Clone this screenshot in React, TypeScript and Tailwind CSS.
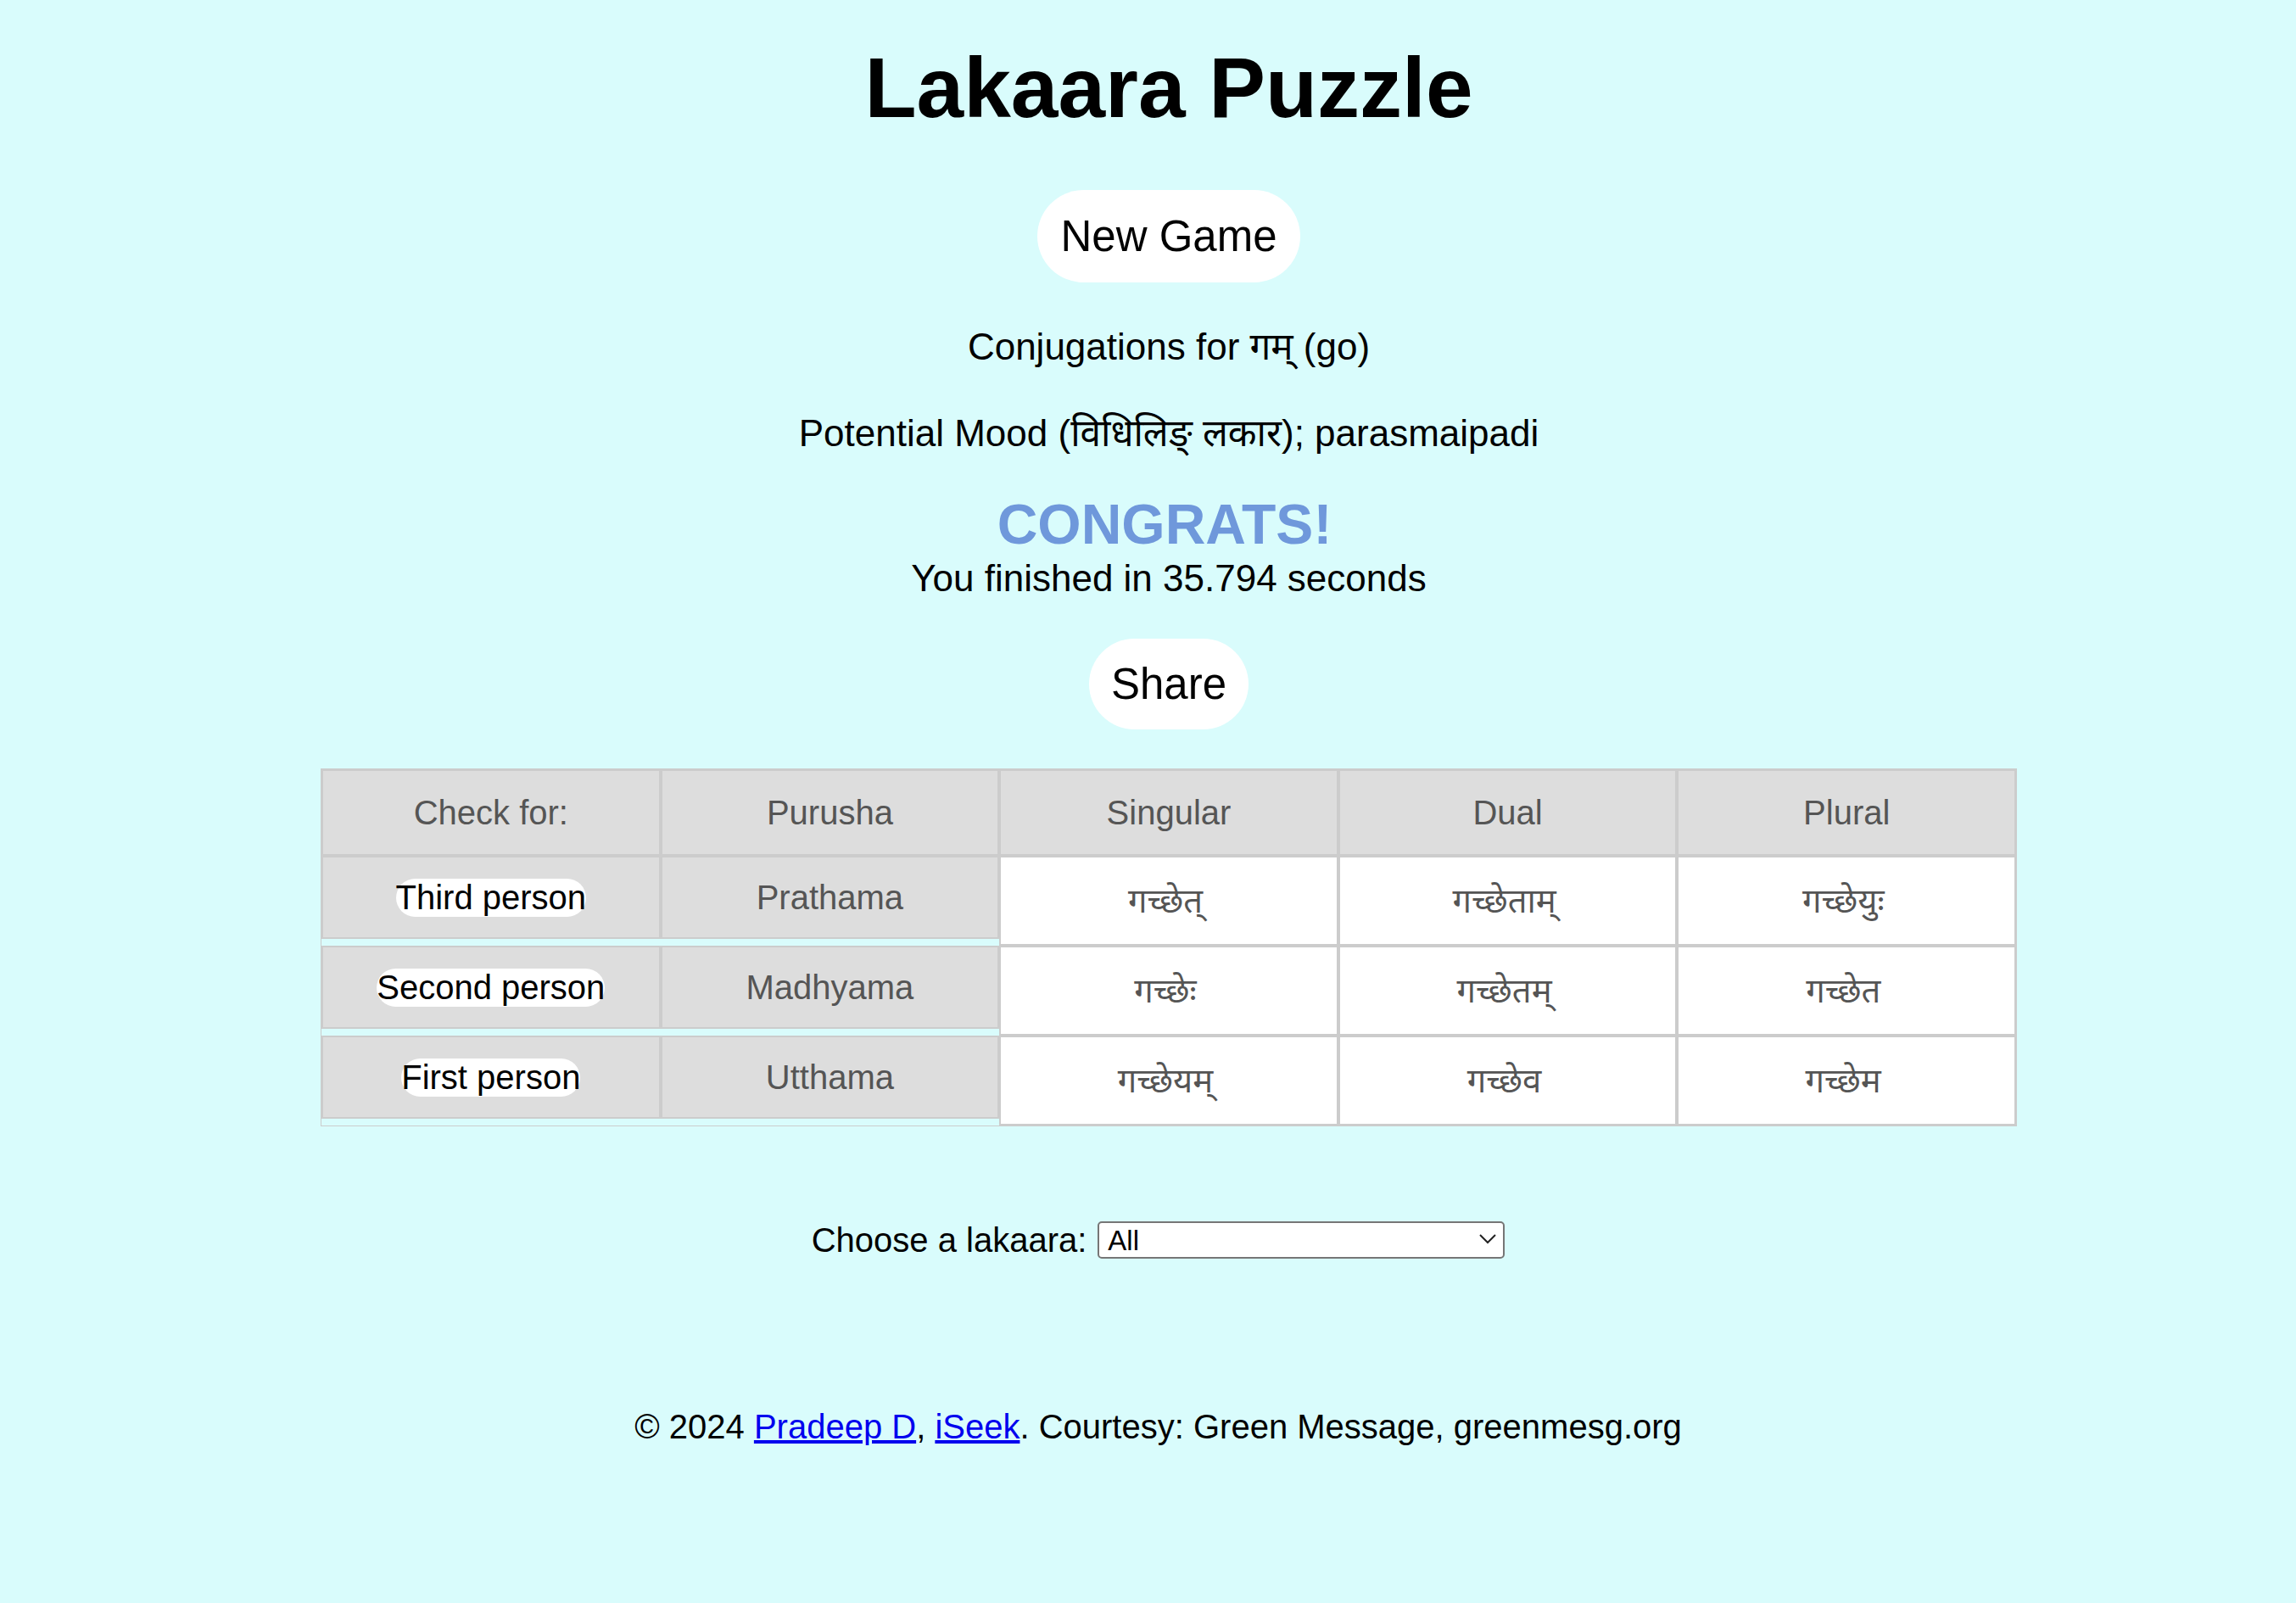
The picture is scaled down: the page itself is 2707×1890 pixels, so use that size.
import React from 'react';

// Conjugation grid rows: label, purusha name, then singular / dual / plural forms
type Row = {
  label: string;
  purusha: string;
  forms: string[];
};

const rows: Row[] = [
  { label: 'Third person', purusha: 'Prathama', forms: ['गच्छेत्', 'गच्छेताम्', 'गच्छेयुः'] },
  { label: 'Second person', purusha: 'Madhyama', forms: ['गच्छेः', 'गच्छेतम्', 'गच्छेत'] },
  { label: 'First person', purusha: 'Utthama', forms: ['गच्छेयम्', 'गच्छेव', 'गच्छेम'] },
];

const headers = ['Check for:', 'Purusha', 'Singular', 'Dual', 'Plural'];

function PillButton({ children, className }: { children: React.ReactNode; className: string }) {
  return (
    <button className={`bg-white rounded-full text-black cursor-pointer ${className}`}>{children}</button>
  );
}

function ConjugationTable() {
  return (
    <div className="mt-[46px] w-[2000px] border border-[#cccccc] text-[40px] text-[#555555]">
      <div className="grid grid-cols-5">
        {headers.map((h) => (
          <div key={h} className="h-[102px] bg-[#dddddd] border-2 border-[#cccccc] flex items-center justify-center">
            {h}
          </div>
        ))}
      </div>
      {rows.map((row) => (
        <div key={row.label} className="grid grid-cols-5 items-start">
          <div className="h-[98px] bg-[#dddddd] border-2 border-[#cccccc] flex items-center justify-center">
            <PillButton className="text-[40px] leading-[45px] px-0 rounded-[22px]">{row.label}</PillButton>
          </div>
          <div className="h-[98px] bg-[#dddddd] border-2 border-[#cccccc] flex items-center justify-center">
            {row.purusha}
          </div>
          {row.forms.map((f) => (
            <div key={f} className="h-[106px] bg-white border-2 border-[#cccccc] flex items-center justify-center pr-[8px]">
              {f}
            </div>
          ))}
        </div>
      ))}
    </div>
  );
}

export default function App() {
  return (
    <div
      className="min-h-screen bg-[#d9fcfc] text-black pb-[180px]"
      style={{ fontFamily: '"Liberation Sans", Arial, "Noto Sans Devanagari", sans-serif' }}
    >
      <div className="pl-[49px] flex flex-col items-center">
        <h1 className="mt-[53px] text-[100px] font-bold leading-none">Lakaara Puzzle</h1>

        <PillButton className="mt-[71px] h-[109px] px-[27px] text-[51px] leading-none">New Game</PillButton>

        <p className="mt-[54px] text-[44px] leading-none">Conjugations for गम् (go)</p>
        <p className="mt-[58px] text-[44px] leading-none">Potential Mood (विधिलिङ् लकार); parasmaipadi</p>

        <h2 className="mt-[52px] text-[66px] font-bold leading-none text-[#6f98db] pr-[10px]">CONGRATS!</h2>
        <p className="mt-[9px] text-[44px] leading-none">You finished in 35.794 seconds</p>

        <PillButton className="mt-[49px] h-[107px] px-[26px] text-[51px] leading-none">Share</PillButton>

        <ConjugationTable />
      </div>

      <div className="pl-[24px] flex flex-col items-center">
        <div className="mt-[112px] h-[44px] flex items-center text-[40px] leading-none">
          <label htmlFor="lakaara">Choose a lakaara:</label>
          <div className="relative ml-[13px]">
            <select
              id="lakaara"
              className="appearance-none w-[480px] h-[44px] border-2 border-[#767676] rounded-[5px] bg-white pl-[10px] text-[33px] leading-none text-black"
            >
              <option>All</option>
            </select>
            <svg className="absolute right-[10px] top-[15px] pointer-events-none" width="20" height="12" viewBox="0 0 20 12">
              <polyline points="1,1 10,10 19,1" fill="none" stroke="#222" strokeWidth="2" />
            </svg>
          </div>
        </div>

        <p className="mt-[178px] text-[40px] leading-none">
          © 2024{' '}
          <a href="#" className="text-[#0000ee] underline">Pradeep D</a>,{' '}
          <a href="#" className="text-[#0000ee] underline">iSeek</a>. Courtesy: Green Message, greenmesg.org
        </p>
      </div>
    </div>
  );
}
